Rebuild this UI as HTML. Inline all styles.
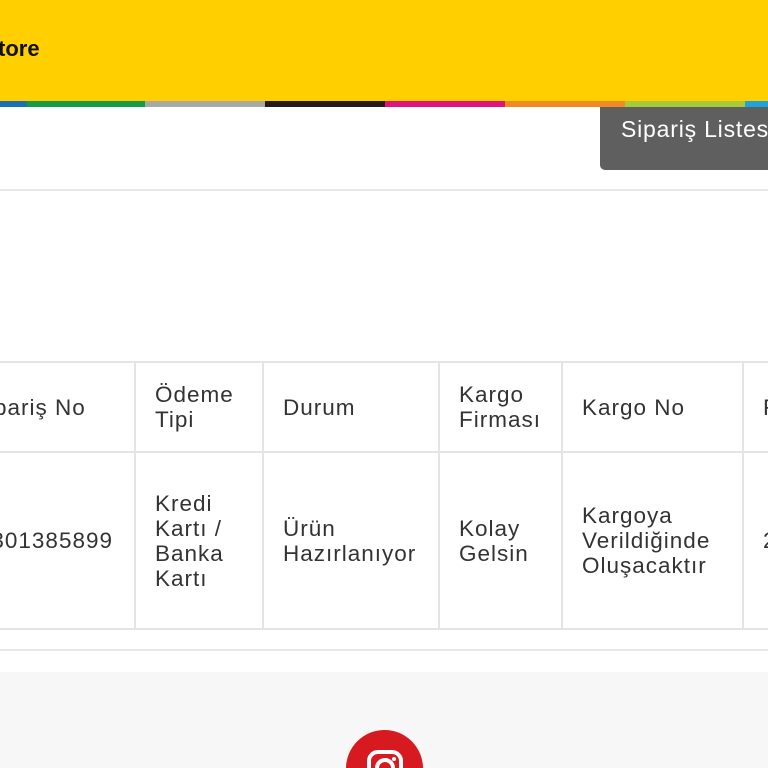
<!DOCTYPE html>
<html><head><meta charset="utf-8"><style>
*{margin:0;padding:0;box-sizing:border-box}
html,body{width:768px;height:768px;overflow:hidden}
body{background:#fff;font-family:"Liberation Sans",sans-serif;color:#333}
#w{position:relative;width:768px;height:768px;overflow:hidden}
.hdr{position:absolute;left:0;top:0;width:768px;height:101px;background:#ffcf00}
.logo{position:absolute;left:-2px;top:36px;font-weight:bold;font-size:22px;color:#111}
.bar{position:absolute;top:101px;height:6px;}
.btn{position:absolute;left:600px;top:107px;width:168px;height:63px;background:#5f5f5f;border-radius:0 0 0 5px;color:#fff;font-size:23px;letter-spacing:0.8px;padding:9px 0 0 21px;white-space:nowrap;overflow:hidden}
.hl{position:absolute;left:0;width:768px;height:2px;background:#e8e8e8}
table{position:absolute;left:-60px;top:361px;border-collapse:collapse;table-layout:fixed;width:900px;font-size:22.5px;line-height:25px;letter-spacing:1px}
td{border:2px solid #e4e4e4;padding:0 0 0 19px;vertical-align:middle;white-space:nowrap;overflow:hidden}
.foot{position:absolute;left:0;top:672px;width:768px;height:96px;background:#f7f7f7}
.ig{position:absolute;left:346px;top:730px;width:77px;height:77px;border-radius:50%;background:#d71920;overflow:hidden}
</style></head><body><div id="w">
<div class="hdr"><div class="logo">tore</div></div>
<div class="bar" style="left:0;width:27px;background:#1a6fb5"></div>
<div class="bar" style="left:27px;width:118px;background:#159a48"></div>
<div class="bar" style="left:145px;width:120px;background:#a8a8a8"></div>
<div class="bar" style="left:265px;width:120px;background:#231a1a"></div>
<div class="bar" style="left:385px;width:120px;background:#e0147e"></div>
<div class="bar" style="left:505px;width:120px;background:#f08a24"></div>
<div class="bar" style="left:625px;width:120px;background:#a6cc3c"></div>
<div class="bar" style="left:745px;width:23px;background:#1ea3dc"></div>
<div class="btn">Sipariş Listesi</div>
<div class="hl" style="top:189px"></div>
<div class="foot"></div>
<table>
<colgroup><col style="width:194px"><col style="width:128px"><col style="width:176px"><col style="width:123px"><col style="width:181px"><col style="width:98px"></colgroup>
<tr style="height:90px"><td style="padding-left:30px">Sipariş No</td><td>Ödeme<br>Tipi</td><td>Durum</td><td>Kargo<br>Firması</td><td>Kargo No</td><td>F</td></tr>
<tr style="height:177px"><td style="padding-left:0;text-align:right;padding-right:21px">85301385899</td><td>Kredi<br>Kartı /<br>Banka<br>Kartı</td><td>Ürün<br>Hazırlanıyor</td><td>Kolay<br>Gelsin</td><td>Kargoya<br>Verildiğinde<br>Oluşacaktır</td><td>2</td></tr>
</table>
<div class="hl" style="top:649px"></div>
<div class="ig"><svg width="77" height="77" viewBox="0 0 77 77"><rect x="23" y="22" width="32" height="32" rx="9" fill="none" stroke="#fff" stroke-width="4"/><circle cx="39" cy="38" r="8" fill="none" stroke="#fff" stroke-width="4"/><circle cx="48" cy="29" r="2" fill="#fff"/></svg></div>
</div></body></html>
